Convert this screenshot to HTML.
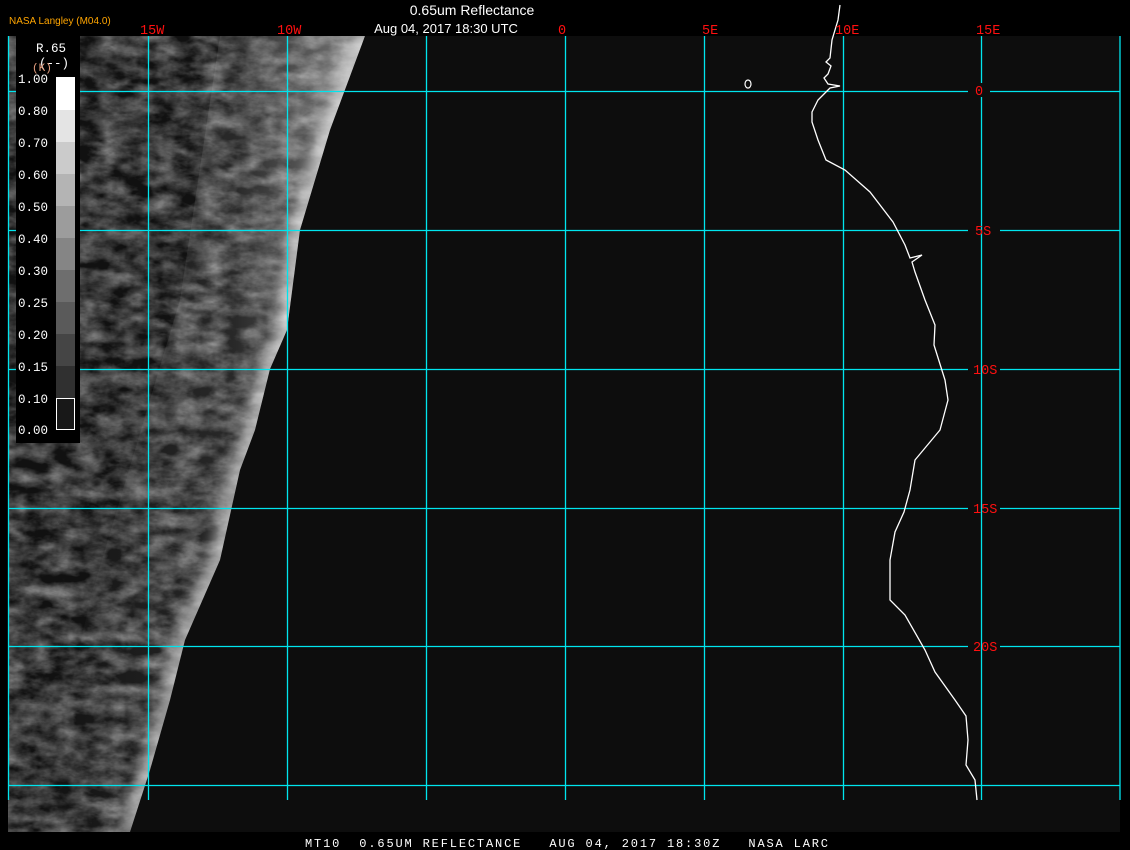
<!DOCTYPE html>
<html><head><style>
body{margin:0;background:#000;width:1130px;height:850px;overflow:hidden;font-family:"Liberation Sans",sans-serif}
</style></head><body>
<svg width="1130" height="850" xmlns="http://www.w3.org/2000/svg" style="position:absolute;left:0;top:0">
<defs>
<filter id="n" x="0" y="0" width="100%" height="100%" color-interpolation-filters="sRGB">
<feTurbulence type="fractalNoise" baseFrequency="0.04 0.07" numOctaves="4" seed="3"/>
<feColorMatrix type="matrix" values="0.33 0.33 0.33 0 0  0.33 0.33 0.33 0 0  0.33 0.33 0.33 0 0  0 0 0 0 1"/>
<feComponentTransfer><feFuncR type="linear" slope="2.2" intercept="-0.8"/><feFuncG type="linear" slope="2.2" intercept="-0.8"/><feFuncB type="linear" slope="2.2" intercept="-0.8"/></feComponentTransfer>
</filter>
<filter id="b"><feGaussianBlur stdDeviation="6"/></filter>
<linearGradient id="g" x1="0" x2="1" y1="0" y2="0">
<stop offset="0" stop-color="#fff" stop-opacity="0"/>
<stop offset="0.6" stop-color="#fff" stop-opacity="0.1"/>
<stop offset="1" stop-color="#fff" stop-opacity="0.45"/>
</linearGradient>
<clipPath id="c"><polygon points="8,36 365,36 330,130 300,230 287,330 270,369 255,430 240,470 220,560 185,640 170,700 150,770 130,832 8,832"/></clipPath>
</defs>
<rect x="8" y="36" width="1112" height="796" fill="#0d0d0d"/>
<g clip-path="url(#c)">
<rect x="8" y="36" width="360" height="800" fill="#262626"/>
<rect x="8" y="36" width="360" height="800" filter="url(#n)" opacity="0.55"/>
<polygon points="220,36 365,36 330,130 300,230 287,330 270,369 255,430 240,470 220,560 185,640 170,700 150,770 130,832 40,832 90,600 180,300" fill="url(#g)"/>
<polyline fill="none" stroke="#fff" stroke-width="22" opacity="0.55" filter="url(#b)" points="365,36 330,130 300,230 287,330 270,369 255,430 240,470 220,560 185,640 170,700 150,770 130,832"/>
</g>
<g stroke="#00e5ee" stroke-width="1.3">
<line x1="8.5" y1="36" x2="8.5" y2="800"/>
<line x1="148.5" y1="36" x2="148.5" y2="800"/>
<line x1="287.5" y1="36" x2="287.5" y2="800"/>
<line x1="426.5" y1="36" x2="426.5" y2="800"/>
<line x1="565.5" y1="36" x2="565.5" y2="800"/>
<line x1="704.5" y1="36" x2="704.5" y2="800"/>
<line x1="843.5" y1="36" x2="843.5" y2="800"/>
<line x1="981.5" y1="36" x2="981.5" y2="83"/><line x1="981.5" y1="97" x2="981.5" y2="800"/>
<line x1="1120" y1="36" x2="1120" y2="800"/>
<g>
<line x1="8" y1="91.5" x2="968" y2="91.5"/><line x1="990" y1="91.5" x2="1120" y2="91.5"/>
<line x1="8" y1="230.5" x2="968" y2="230.5"/><line x1="1000" y1="230.5" x2="1120" y2="230.5"/>
<line x1="8" y1="369.5" x2="968" y2="369.5"/><line x1="1000" y1="369.5" x2="1120" y2="369.5"/>
<line x1="8" y1="508.5" x2="968" y2="508.5"/><line x1="1000" y1="508.5" x2="1120" y2="508.5"/>
<line x1="8" y1="646.5" x2="968" y2="646.5"/><line x1="1000" y1="646.5" x2="1120" y2="646.5"/>
<line x1="8" y1="785.5" x2="1120" y2="785.5"/>
</g></g>
<polyline fill="none" stroke="#fff" stroke-width="1.3" points="840,5 838,20 832,40 830,58 826,62 831,66 828,74 824,78 828,84 840,86 830,88 826,92 818,100 812,112 812,122 818,140 826,160 845,170 870,192 893,222 905,245 910,258 922,255 912,262 915,272 925,300 935,325 934,345 945,380 948,400 940,430 915,460 910,490 904,512 895,532 890,560 890,600 905,615 925,650 935,672 955,700 966,716 968,740 966,765 975,780 977,800"/>
<ellipse cx="748" cy="84" rx="3" ry="4" fill="none" stroke="#fff" stroke-width="1.2"/>
<rect x="16" y="36" width="64" height="407" fill="#000"/>
<g>
<rect x="56" y="77" width="19" height="33" fill="#fff"/>
<rect x="56" y="110" width="19" height="32" fill="#e4e4e4"/>
<rect x="56" y="142" width="19" height="32" fill="#cbcbcb"/>
<rect x="56" y="174" width="19" height="32" fill="#b4b4b4"/>
<rect x="56" y="206" width="19" height="32" fill="#9c9c9c"/>
<rect x="56" y="238" width="19" height="32" fill="#858585"/>
<rect x="56" y="270" width="19" height="32" fill="#6e6e6e"/>
<rect x="56" y="302" width="19" height="32" fill="#5a5a5a"/>
<rect x="56" y="334" width="19" height="32" fill="#454545"/>
<rect x="56" y="366" width="19" height="32" fill="#303030"/>
<rect x="56" y="398" width="19" height="32" fill="#181818"/>
<rect x="56.5" y="398.5" width="18" height="31" fill="none" stroke="#fff"/>
</g>
<g fill="#fff" font-family="Liberation Mono,monospace" font-size="12.5">
<text x="36" y="52">R.65</text>
<text x="39" y="67">(--)</text>
<text x="18" y="83">1.00</text><text x="18" y="115">0.80</text><text x="18" y="147">0.70</text>
<text x="18" y="179">0.60</text><text x="18" y="211">0.50</text><text x="18" y="243">0.40</text>
<text x="18" y="275">0.30</text><text x="18" y="307">0.25</text><text x="18" y="339">0.20</text>
<text x="18" y="371">0.15</text><text x="18" y="403">0.10</text><text x="18" y="434">0.00</text>
</g>
<text x="32" y="71" fill="#e8a080" font-family="Liberation Mono,monospace" font-size="11">(K)</text>
<text x="9" y="24" fill="#ffa500" font-size="10">NASA Langley (M04.0)</text>
<text x="472" y="15" fill="#fff" font-size="14" text-anchor="middle">0.65um Reflectance</text>
<text x="446" y="33" fill="#fff" font-size="13" text-anchor="middle">Aug 04, 2017 18:30 UTC</text>
<g fill="#ff1010" font-family="Liberation Mono,monospace" font-size="13.5">
<text x="140" y="34">15W</text><text x="277" y="34">10W</text><text x="558" y="34">0</text>
<text x="702" y="34">5E</text><text x="835" y="34">10E</text><text x="976" y="34">15E</text>
<text x="975" y="95">0</text><text x="975" y="235">5S</text><text x="973" y="374">10S</text>
<text x="973" y="513">15S</text><text x="973" y="651">20S</text>
</g>
<text x="305" y="847" fill="#fff" font-family="Liberation Mono,monospace" font-size="12" textLength="523" lengthAdjust="spacing" xml:space="preserve">MT10  0.65UM REFLECTANCE   AUG 04, 2017 18:30Z   NASA LARC</text>
</svg>
</body></html>
